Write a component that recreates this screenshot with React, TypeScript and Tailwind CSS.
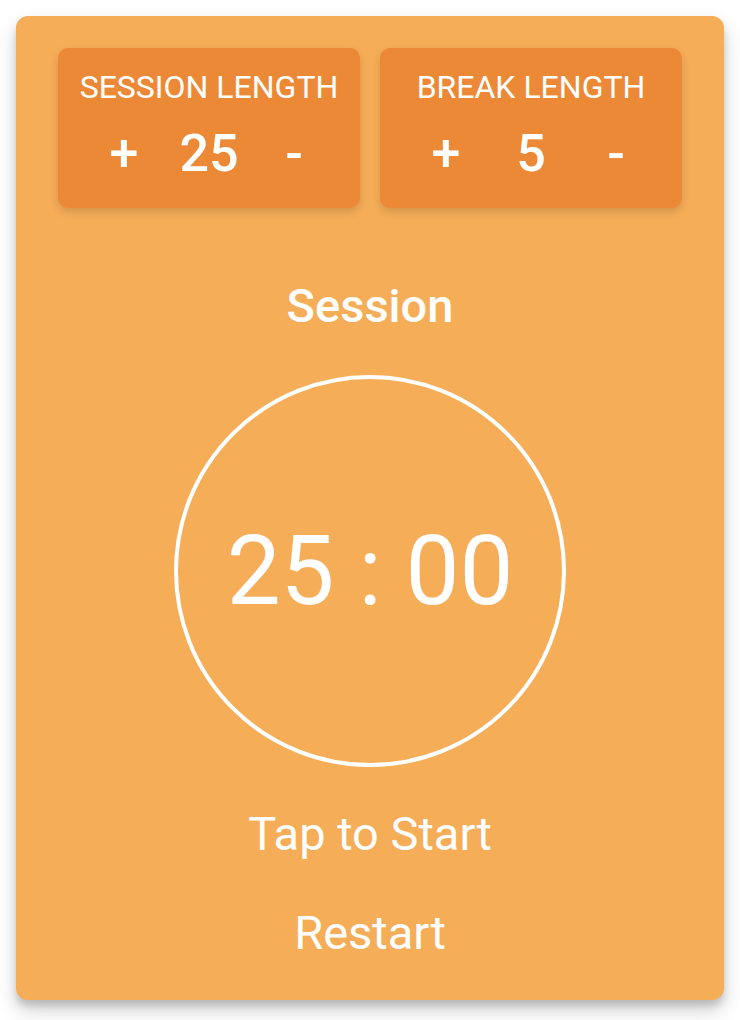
import { useState } from 'react';

function LengthControl({
  label,
  value,
  onInc,
  onDec,
}: {
  label: string;
  value: number;
  onInc: () => void;
  onDec: () => void;
}) {
  return (
    <div className="flex flex-1 flex-col items-center rounded-[10px] bg-[#ec8937] pt-[20px] pb-[24px] shadow-[0_4px_8px_rgba(0,0,0,0.14)]">
      <div className="text-[32px] leading-[38px] font-normal text-white">{label}</div>
      <div className="mt-[18px] grid grid-cols-[60px_60px_60px] gap-x-[25px] text-[52px] leading-[60px] font-medium text-white">
        <button className="text-center" onClick={onInc}>+</button>
        <span className="text-center">{value}</span>
        <button className="text-center" onClick={onDec}>-</button>
      </div>
    </div>
  );
}

export default function App() {
  const [session, setSession] = useState(25);
  const [breakLen, setBreakLen] = useState(5);

  const clamp = (n: number) => Math.min(60, Math.max(1, n));
  const minutes = String(session).padStart(2, '0');

  return (
    <div className="min-h-[1020px] bg-white p-[16px] font-['Roboto',sans-serif]">
      <div className="flex h-[984px] flex-col items-center rounded-[12px] bg-[#f6ad58] px-[42px] pt-[32px] shadow-[0_10px_20px_rgba(0,0,0,0.19),0_6px_6px_rgba(0,0,0,0.13)]">
        {/* length controls */}
        <div className="flex w-full gap-[20px]">
          <LengthControl
            label="SESSION LENGTH"
            value={session}
            onInc={() => setSession((s) => clamp(s + 1))}
            onDec={() => setSession((s) => clamp(s - 1))}
          />
          <LengthControl
            label="BREAK LENGTH"
            value={breakLen}
            onInc={() => setBreakLen((b) => clamp(b + 1))}
            onDec={() => setBreakLen((b) => clamp(b - 1))}
          />
        </div>

        <h2 className="mt-[70px] text-[47px] leading-[55px] font-medium text-white">Session</h2>

        {/* timer ring */}
        <div className="mt-[42px] flex h-[392px] w-[392px] items-center justify-center rounded-full border-[4px] border-white">
          <span className="text-[96px] leading-none font-normal text-white">
            {minutes} : 00
          </span>
        </div>

        <button className="mt-[39px] text-[47px] leading-[55px] font-normal text-white">Tap to Start</button>
        <button className="mt-[44px] text-[47px] leading-[55px] font-normal text-white">Restart</button>
      </div>
    </div>
  );
}
